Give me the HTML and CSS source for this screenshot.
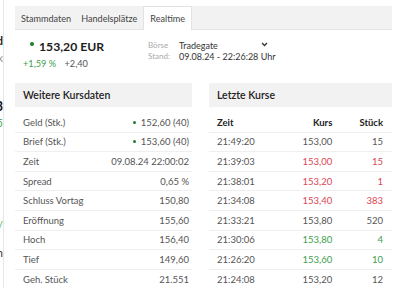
FILE: index.html
```html
<!DOCTYPE html>
<html lang="de">
  <head>
    <meta charset="UTF-8" />
    <title>Realtime</title>
    <link rel="stylesheet" href="styles.css" />
  </head>
  <body>
    <div class="page">
      <div class="side-strip">
        <span class="frag frag-a">d</span>
        <span class="frag frag-b">x</span>
        <span class="frag frag-c">3</span>
        <span class="frag frag-d">5</span>
        <span class="frag frag-e">/</span>
        <span class="frag frag-f">n</span>
      </div>

      <div class="main">
        <div class="tabs">
          <div class="tab">Stammdaten</div>
          <div class="tab">Handelsplätze</div>
          <div class="tab active">Realtime</div>
        </div>

        <div class="quote">
          <div class="price-box">
            <div class="price"><span class="dot"></span>153,20 EUR</div>
            <div class="change">
              <span class="pct">+1,59 %</span>
              <span class="abs">+2,40</span>
            </div>
          </div>
          <div class="venue">
            <div class="venue-row">
              <span class="venue-label">Börse</span>
              <span class="venue-value select">Tradegate
                <svg class="chevron" width="7" height="5" viewBox="0 0 7 5"><path d="M1 1l2.5 2.5L6 1" fill="none" stroke="#333" stroke-width="1.3"/></svg>
              </span>
            </div>
            <div class="venue-row">
              <span class="venue-label">Stand:</span>
              <span class="venue-value">09.08.24 - 22:26:28 Uhr</span>
            </div>
          </div>
        </div>

        <div class="panels">
          <div class="panel panel-left">
            <div class="panel-head">Weitere Kursdaten</div>
            <div class="row"><span>Geld (Stk.)</span><span><span class="dot small"></span>152,60 (40)</span></div>
            <div class="row"><span>Brief (Stk.)</span><span><span class="dot small"></span>153,60 (40)</span></div>
            <div class="row"><span>Zeit</span><span>09.08.24 22:00:02</span></div>
            <div class="row"><span>Spread</span><span>0,65 %</span></div>
            <div class="row"><span>Schluss Vortag</span><span>150,80</span></div>
            <div class="row"><span>Eröffnung</span><span>155,60</span></div>
            <div class="row"><span>Hoch</span><span>156,40</span></div>
            <div class="row"><span>Tief</span><span>149,60</span></div>
            <div class="row"><span>Geh. Stück</span><span>21.551</span></div>
          </div>

          <div class="panel panel-right">
            <div class="panel-head">Letzte Kurse</div>
            <div class="trade head"><span>Zeit</span><span>Kurs</span><span>Stück</span></div>
            <div class="trade"><span>21:49:20</span><span>153,00</span><span>15</span></div>
            <div class="trade down"><span>21:39:03</span><span>153,00</span><span>15</span></div>
            <div class="trade down"><span>21:38:01</span><span>153,20</span><span>1</span></div>
            <div class="trade down"><span>21:34:08</span><span>153,40</span><span>383</span></div>
            <div class="trade"><span>21:33:21</span><span>153,80</span><span>520</span></div>
            <div class="trade up"><span>21:30:06</span><span>153,80</span><span>4</span></div>
            <div class="trade up"><span>21:26:20</span><span>153,60</span><span>10</span></div>
            <div class="trade"><span>21:24:08</span><span>153,20</span><span>12</span></div>
          </div>
        </div>
      </div>
    </div>
  </body>
</html>
```

FILE: styles.css
```css
* {
  margin: 0;
  padding: 0;
  box-sizing: border-box;
}

body {
  background-color: #fff;
  color: #444;
  font-family: "Lato", "Noto Sans", sans-serif;
  font-size: 10px;
  overflow: hidden;
}

.page {
  display: flex;
  width: 399px;
  height: 288px;
  overflow: hidden;
}

/* cut-off neighbour column on the left */
.side-strip {
  position: relative;
  width: 4px;
  flex-shrink: 0;
  border-right: 1px solid #e6e6e6;
  overflow: hidden;
}

.frag {
  position: absolute;
  right: 0;
  font-size: 11px;
  line-height: 1;
}

.frag-a { top: 35px; color: #222; font-weight: 700; }
.frag-b { top: 52px; color: #999; }
.frag-c { top: 100px; color: #111; font-weight: 700; font-size: 13px; }
.frag-d { top: 117px; color: #4caf50; }
.frag-e { top: 220px; color: #4caf50; }
.frag-f { top: 247px; color: #333; }

.main {
  flex: 1;
  padding: 6px 7px 0 11px;
}

.tabs {
  display: flex;
  height: 24px;
  background-color: #f2f2f2;
  border-bottom: 1px solid #e3e3e3;
}

.tab {
  padding: 7px 5px 0;
  color: #444;
  font-size: 9.1px;
}

.tab:first-child {
  padding-left: 6px;
}

.tab.active {
  background-color: #fff;
  border: 1px solid #e3e3e3;
  border-bottom: none;
  margin-bottom: -1px;
  margin-left: 1px;
  padding: 6px 6px 0;
}

.quote {
  display: flex;
  padding: 9px 0 0 8px;
  height: 53px;
}

.price-box {
  width: 125px;
}

.price {
  font-size: 12.2px;
  font-weight: 700;
  color: #1d1d1d;
  padding-left: 7px;
  display: flex;
  align-items: center;
}

.dot {
  display: inline-block;
  width: 4px;
  height: 4px;
  border-radius: 50%;
  background-color: #1f7a2c;
  margin-right: 5px;
  position: relative;
  top: -3px;
}

.dot.small {
  width: 3px;
  height: 3px;
  top: -2px;
  margin-right: 5px;
}

.change {
  margin-top: 4px;
  font-size: 9.2px;
}

.pct {
  color: #3e9e4c;
  margin-right: 6px;
}

.abs {
  color: #555;
}

.venue {
  padding-top: 1px;
}

.venue-row {
  display: flex;
  line-height: 11px;
}

.venue-label {
  width: 31px;
  color: #aaa;
  font-size: 8px;
}

.venue-value {
  color: #333;
  font-size: 9px;
}

.select {
  display: flex;
  align-items: center;
  width: 89px;
  justify-content: space-between;
}

.chevron {
  margin-top: -2px;
}

.panels {
  display: flex;
  gap: 17px;
}

.panel-left {
  width: 177px;
}

.panel-right {
  width: 183px;
}

.panel-head {
  height: 24px;
  background-color: #f2f2f2;
  padding: 6px 8px 0;
  font-size: 10.5px;
  color: #222;
  font-weight: 600;
  margin-bottom: 6px;
}

.row,
.trade {
  display: flex;
  align-items: center;
  height: 19.6px;
  border-bottom: 1px solid #efefef;
  color: #555;
  font-size: 9.5px;
}

.row {
  justify-content: space-between;
  padding: 0 3px 0 8px;
}

.trade {
  padding: 0 9px 0 8px;
}

.trade span:nth-child(1) {
  width: 60px;
}

.trade span:nth-child(2) {
  width: 56px;
  text-align: right;
}

.trade span:nth-child(3) {
  width: 51px;
  text-align: right;
}

.trade.head {
  color: #222;
  font-weight: 700;
}

.trade.down span + span {
  color: #e04452;
}

.trade.up span + span {
  color: #3e9e4c;
}
```
